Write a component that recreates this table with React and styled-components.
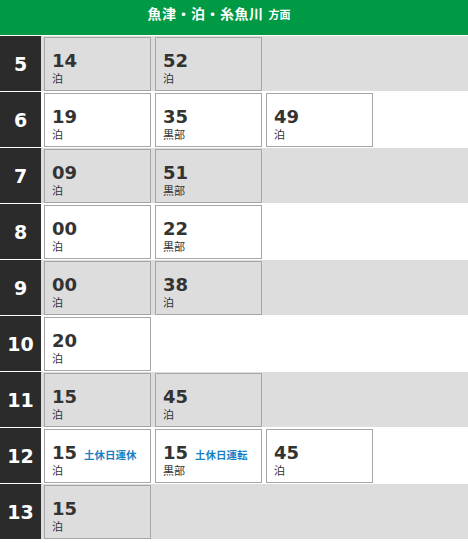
import styled, { createGlobalStyle } from "styled-components"

const GlobalStyle = createGlobalStyle`
  body {
    margin: 0;
    background: #fff;
    font-family: "DejaVu Sans", "Noto Sans CJK JP", sans-serif;
  }
`

const rows = [
  { hour: 5, times: [{ m: "14", d: "泊" }, { m: "52", d: "泊" }] },
  { hour: 6, times: [{ m: "19", d: "泊" }, { m: "35", d: "黒部" }, { m: "49", d: "泊" }] },
  { hour: 7, times: [{ m: "09", d: "泊" }, { m: "51", d: "黒部" }] },
  { hour: 8, times: [{ m: "00", d: "泊" }, { m: "22", d: "黒部" }] },
  { hour: 9, times: [{ m: "00", d: "泊" }, { m: "38", d: "泊" }] },
  { hour: 10, times: [{ m: "20", d: "泊" }] },
  { hour: 11, times: [{ m: "15", d: "泊" }, { m: "45", d: "泊" }] },
  {
    hour: 12,
    times: [
      { m: "15", d: "泊", note: "土休日運休" },
      { m: "15", d: "黒部", note: "土休日運転" },
      { m: "45", d: "泊" },
    ],
  },
  { hour: 13, times: [{ m: "15", d: "泊" }] },
]

function App() {
  return (
    <>
      <GlobalStyle />
      <Header>
        <Title>魚津・泊・糸魚川</Title>
        <Sub>方面</Sub>
      </Header>
      {rows.map((r, i) => (
        <Row key={r.hour} gray={i % 2 === 0}>
          <Hour>{r.hour}</Hour>
          <Cards>
            {r.times.map((t, j) => (
              <Card key={j} gray={i % 2 === 0}>
                <Top>
                  <Minute>{t.m}</Minute>
                  {t.note && <Note>{t.note}</Note>}
                </Top>
                <Dest>{t.d}</Dest>
              </Card>
            ))}
          </Cards>
        </Row>
      ))}
    </>
  )
}

export default App

const Header = styled.div`
  height: 35px;
  margin-bottom: 1px;
  background: #009944;
  color: #fff;
  display: flex;
  justify-content: center;
  align-items: baseline;
  padding: 3px 30px 0 0;
  box-sizing: border-box;
  font-family: "Noto Sans CJK JP", sans-serif;
  font-weight: 700;
`
const Title = styled.span`
  font-size: 14px;
  letter-spacing: 0.5px;
`
const Sub = styled.span`
  font-size: 11px;
  margin-left: 5px;
`
const Row = styled.div`
  display: flex;
  height: 55px;
  margin-bottom: 1px;
  background: ${({ gray }) => (gray ? "#dddddd" : "#ffffff")};
`
const Hour = styled.div`
  width: 41px;
  flex-shrink: 0;
  background: #2b2b2b;
  color: #fff;
  font-size: 19px;
  font-weight: 700;
  display: flex;
  align-items: center;
  justify-content: center;
`
const Cards = styled.div`
  display: flex;
  gap: 4px;
  padding: 1px 0 0 3px;
`
const Card = styled.div`
  width: 107px;
  height: 54px;
  box-sizing: border-box;
  border: 1px solid #a6a6a6;
  background: ${({ gray }) => (gray ? "#dddddd" : "#ffffff")};
  padding: 14px 0 0 7px;
  color: #333;
`
const Top = styled.div`
  display: flex;
  align-items: baseline;
  height: 19px;
`
const Minute = styled.span`
  font-size: 18px;
  font-weight: 700;
  line-height: 18px;
`
const Note = styled.span`
  font-family: "Noto Sans CJK JP", sans-serif;
  font-size: 10.5px;
  font-weight: 700;
  color: #1a7fc1;
  margin-left: 7px;
`
const Dest = styled.div`
  font-family: "Noto Sans CJK JP", sans-serif;
  font-size: 11px;
  line-height: 12px;
  margin-top: 1px;
  color: #333;
`
